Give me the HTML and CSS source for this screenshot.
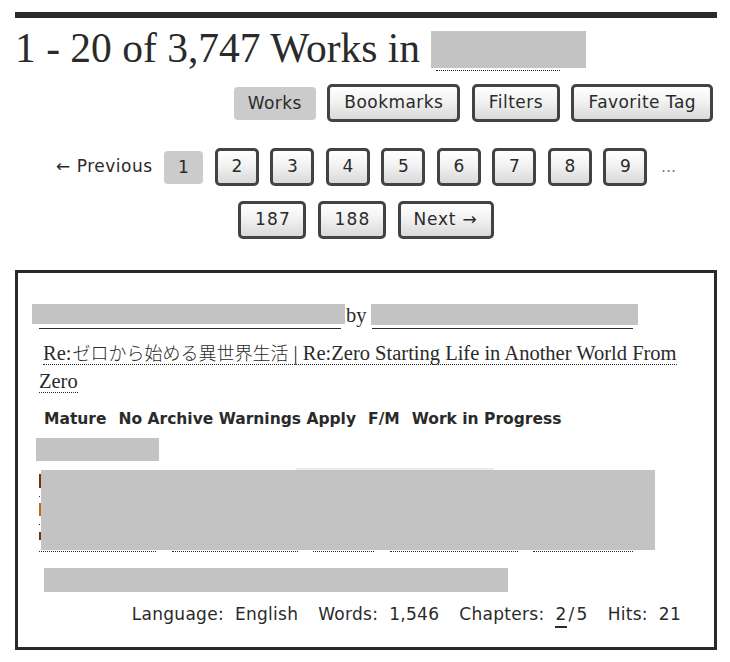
FILE: index.html
```html
<!DOCTYPE html>
<html lang="en">
<head>
<meta charset="utf-8">
<title>Works</title>
<link rel="stylesheet" href="styles.css">
</head>
<body>
<div class="page">
  <div class="topbar"></div>
  <h2 class="heading">1 - 20 of 3,747 Works in <span class="heading-tag"><span class="redact heading-redact"></span></span></h2>

  <ul class="actions">
    <li class="current">Works</li>
    <li class="btn">Bookmarks</li>
    <li class="btn">Filters</li>
    <li class="btn">Favorite Tag</li>
  </ul>

  <ol class="pagination">
    <li class="prev">← Previous</li>
    <li class="current page-cur">1</li>
    <li class="btn pg">2</li>
    <li class="btn pg">3</li>
    <li class="btn pg">4</li>
    <li class="btn pg">5</li>
    <li class="btn pg">6</li>
    <li class="btn pg">7</li>
    <li class="btn pg">8</li>
    <li class="btn pg">9</li>
    <li class="gap">…</li>
  </ol>
  <ol class="pagination second">
    <li class="btn pg">187</li>
    <li class="btn pg">188</li>
    <li class="btn next">Next →</li>
  </ol>

  <div class="work">
    <div class="work-heading">
      <span class="redact r-title"></span>
      <span class="by">by</span>
      <span class="redact r-author"></span>
    </div>
    <div class="fandoms"><a class="tag fandom"><span class="lat">Re:</span><span class="cjk">ゼロから始める異世界生活</span><span class="lat"> | Re:Zero Starting Life in Another World From</span><br><span class="lat">Zero</span></a></div>
    <ul class="required">
      <li>Mature</li>
      <li>No Archive Warnings Apply</li>
      <li>F/M</li>
      <li>Work in Progress</li>
    </ul>
    <div class="redact r-date"></div>
    <div class="strip"></div>
    <div class="redact r-tags"></div>
    <div class="tag-lines">
      <span class="seg s1"></span>
      <span class="seg s2"></span>
      <span class="seg s3"></span>
      <span class="seg s4"></span>
      <span class="seg s5"></span>
    </div>
    <div class="redact r-summary"></div>
    <dl class="stats">
      <dt>Language:</dt><dd>English</dd>
      <dt>Words:</dt><dd>1,546</dd>
      <dt>Chapters:</dt><dd><a class="chap">2</a><span class="slash">/</span>5</dd>
      <dt>Hits:</dt><dd>21</dd>
    </dl>
  </div>
</div>
</body>
</html>
```

FILE: styles.css
```css
* { box-sizing: border-box; }

body {
  margin: 0;
  background: #fff;
  color: #2a2a2a;
  font-family: "DejaVu Sans", Verdana, sans-serif;
}

.page {
  width: 730px;
  padding: 12px 13px 12px 15px;
}

.topbar {
  height: 6px;
  background: #2a2a2a;
}

.heading {
  margin: 7px 0 0;
  font-family: "Liberation Serif", "Times New Roman", serif;
  font-weight: normal;
  font-size: 41.5px;
  line-height: 46px;
  height: 46px;
  white-space: nowrap;
}

.heading-tag {
  position: relative;
  display: inline-block;
  vertical-align: -6px;
  width: 155px;
  height: 37px;
}

.heading-tag::after {
  content: "";
  position: absolute;
  left: 5px;
  top: 39px;
  width: 124px;
  border-top: 1px dotted #2a2a2a;
}

.redact {
  background: #c3c3c3;
}

.heading-redact {
  position: absolute;
  left: 0;
  top: 0;
  width: 155px;
  height: 37px;
}

ul, ol, dl { list-style: none; margin: 0; padding: 0; }

.actions {
  display: flex;
  justify-content: flex-end;
  align-items: flex-start;
  gap: 11.5px;
  margin-top: 13px;
  padding-right: 4px;
}

.btn {
  height: 38px;
  padding: 0 14px;
  border: 3px solid #434343;
  border-radius: 5px;
  background: linear-gradient(#ffffff 0%, #f2f2f2 45%, #d9d9d9 100%);
  font-size: 17px;
  letter-spacing: 0.45px;
  line-height: 31px;
  color: #2a2a2a;
  white-space: nowrap;
}

.btn.pg {
  padding: 0 12.4px 0 13.6px;
  letter-spacing: 1.2px;
}

.btn.next {
  padding: 0 13px;
  letter-spacing: 0.8px;
}

.current {
  height: 33px;
  margin-top: 3px;
  padding: 0 14px;
  border-radius: 4px;
  background: #cbcbcb;
  font-size: 17px;
  letter-spacing: 0.45px;
  line-height: 32px;
  color: #2a2a2a;
}

.pagination {
  display: flex;
  justify-content: center;
  align-items: center;
  gap: 11.5px;
  margin-top: 26px;
}

.pagination.second {
  margin-top: 15px;
}

.prev {
  font-size: 17px;
  letter-spacing: 0.5px;
  line-height: 24px;
  margin-top: -2px;
}

.page-cur {
  margin-top: 0;
  height: 33px;
  padding: 0 14px;
}

.gap {
  font-size: 15px;
  color: #777;
  line-height: 24px;
  margin-left: 2px;
}

.work {
  margin-top: 31px;
  height: 380px;
  border: 3px solid #2a2a2a;
  padding: 0 32px 0 21px;
}

.work-heading {
  display: flex;
  align-items: flex-start;
  height: 26px;
  margin-top: 31px;
  font-family: "Liberation Serif", "Times New Roman", serif;
  font-size: 20.5px;
}

.r-title, .r-author { position: relative; display: block; }

.r-title {
  width: 313px;
  height: 20px;
  margin-left: -7px;
}

.r-title::after {
  content: "";
  position: absolute;
  left: 7px;
  top: 24px;
  width: 302px;
  border-top: 1px solid #2a2a2a;
}

.by {
  margin: 1px 0 0 1px;
  line-height: 20px;
}

.r-author {
  width: 267px;
  height: 21px;
  margin-left: 4px;
}

.r-author::after {
  content: "";
  position: absolute;
  left: 1px;
  top: 24px;
  width: 261px;
  border-top: 1px solid #2a2a2a;
}

.fandoms {
  margin-top: 9px;
  height: 56px;
  font-family: "Liberation Serif", "Times New Roman", serif;
  font-size: 20.5px;
  line-height: 28px;
}

.tag {
  color: #2a2a2a;
  border-bottom: 1px dotted #2a2a2a;
}

.fandom { margin-left: 4px; }

.cjk {
  display: inline-block;
  margin-left: 1px;
  font-family: "Noto Sans CJK JP", sans-serif;
  font-size: 18px;
  font-weight: 300;
  line-height: 18px;
}

.required {
  display: flex;
  margin-top: 12px;
  padding-left: 5px;
  height: 24px;
  font-weight: bold;
  font-size: 15.5px;
  line-height: 24px;
  gap: 12px;
  white-space: nowrap;
}

.r-date {
  width: 123px;
  height: 23px;
  margin: 7px 0 0 -3px;
}

.strip {
  width: 198px;
  height: 2px;
  margin: 7px 0 0 257px;
  background: #ebebeb;
}

.r-tags {
  position: relative;
  width: 614px;
  height: 80px;
  margin-left: 2px;
}

.r-tags::before {
  content: "";
  position: absolute;
  left: -2px;
  top: 0;
  width: 2px;
  height: 72px;
  background-image:
    linear-gradient(#7d2c12, #7d2c12),
    linear-gradient(#2a2a2a, #2a2a2a),
    linear-gradient(#c26a12, #c26a12),
    linear-gradient(#2a2a2a, #2a2a2a),
    linear-gradient(#6b3510, #6b3510);
  background-repeat: no-repeat;
  background-size: 2px 14px, 1px 1px, 2px 13px, 1px 1px, 2px 8px;
  background-position: 0 4px, 0 26px, 0 33px, 0 54px, 0 62px;
}

.tag-lines {
  display: flex;
  gap: 15.5px;
  margin-top: 1px;
  height: 1px;
}

.seg { display: block; border-top: 1px dotted #2a2a2a; }
.s1 { width: 117px; }
.s2 { width: 126px; }
.s3 { width: 61px; }
.s4 { width: 128px; }
.s5 { width: 100px; }

.r-summary {
  width: 464px;
  height: 24px;
  margin: 16px 0 0 5px;
}

.stats {
  display: flex;
  justify-content: flex-end;
  margin-top: 10px;
  padding-right: 1px;
  font-size: 17px;
  letter-spacing: 0.28px;
  line-height: 24px;
  white-space: nowrap;
}

.stats dt { margin-left: 20px; }
.stats dt:first-child { margin-left: 0; }
.stats dd { margin: 0 0 0 11px; }

.chap {
  border-bottom: 2px solid #2a2a2a;
  padding-bottom: 2px;
}

.slash { margin: 0 2px; }
```
